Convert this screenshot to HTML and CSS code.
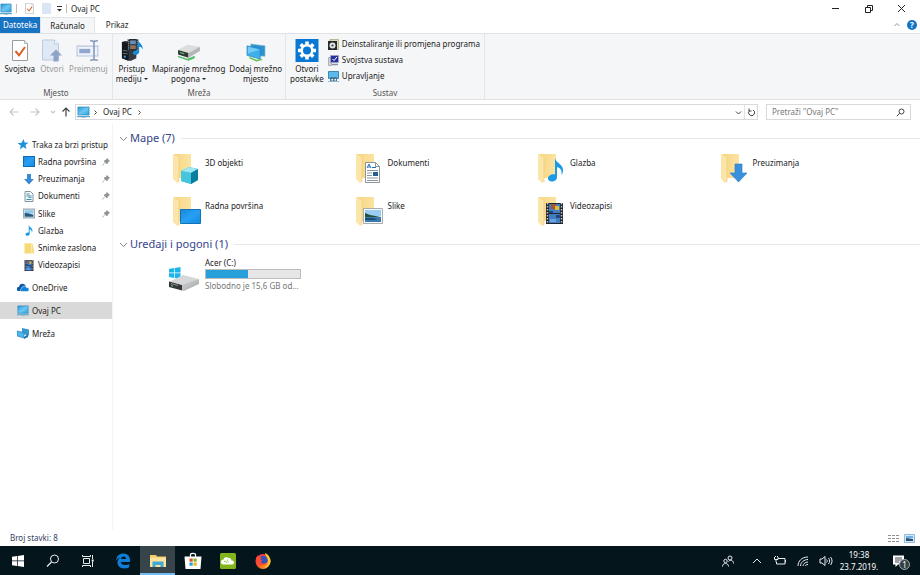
FILE: index.html
```html
<!DOCTYPE html>
<html lang="hr">
<head>
<meta charset="utf-8">
<meta name="viewport" content="width=device-width, initial-scale=1">
<title>Ovaj PC</title>
<link rel="stylesheet" href="styles.css">
</head>
<body>
<svg class="defs" aria-hidden="true">
  <defs>
    <linearGradient id="g-screen" x1="0" y1="0" x2="1" y2="1"><stop offset="0" stop-color="#2a94d8"/><stop offset=".5" stop-color="#6cc8f3"/><stop offset="1" stop-color="#2d9fe0"/></linearGradient>
    <linearGradient id="g-folder" x1="0" y1="0" x2="1" y2="0"><stop offset="0" stop-color="#f7d685"/><stop offset="1" stop-color="#fbe3a0"/></linearGradient>
    <linearGradient id="g-desk" x1="0" y1="0" x2="1" y2="1"><stop offset="0" stop-color="#1a86dc"/><stop offset=".5" stop-color="#27a0f3"/><stop offset="1" stop-color="#1588e0"/></linearGradient>
    <linearGradient id="g-metal" x1="0" y1="0" x2="1" y2="1"><stop offset="0" stop-color="#d6d6d6"/><stop offset="1" stop-color="#a4a5a6"/></linearGradient>
    <linearGradient id="g-fire" x1="0" y1="0" x2="1" y2="1"><stop offset="0" stop-color="#e8236a"/><stop offset=".5" stop-color="#ff5a26"/><stop offset="1" stop-color="#ffc62b"/></linearGradient>
  </defs>
  <symbol id="pc" viewBox="0 0 14 12" preserveAspectRatio="none"><path d="M1 1h12v8H1z" fill="url(#g-screen)" stroke="#2c83b8" stroke-width=".7"/><path d="M0 10h14v1.2H0z" fill="#54a7d4"/><path d="M5 11.2h4v.6H5z" fill="#8aa"/></symbol>
  <symbol id="checkdoc" viewBox="0 0 16 21"><path d="M.5.5h12l3 3v17H.5z" fill="#fff" stroke="#9a9da0"/><path d="M12.500.5v3h3" fill="#eee" stroke="#9a9da0" stroke-width=".7"/><path d="M3.500 11l3.500 4.300 6-8.300" fill="none" stroke="#d9622b" stroke-width="2"/></symbol>
  <symbol id="openi" viewBox="0 0 21 23"><path d="M1 1h12l4 4v16H1z" fill="#dfe8f5" stroke="#bccbe2"/><path d="M13 1v4h4" fill="#f4f7fb" stroke="#bccbe2"/><path d="M14.500 10.500l6 6h-3.500v6h-5v-6H8.500z" fill="#8ea3c8"/></symbol>
  <symbol id="rename" viewBox="0 0 22 21"><path d="M1 6.500h19v9H1z" fill="#eef2f9" stroke="#b9c6de"/><path d="M3 9h10v4H3z" fill="#8fa6d0"/><path d="M13 1.500c2 0 3 .2 3.500 1 .5-.8 1.500-1 3.500-1M13 19.500c2 0 3-.2 3.500-1 .5.8 1.500 1 3.500 1M16.500 2.500v16" fill="none" stroke="#8598bd" stroke-width="1.400"/></symbol>
  <symbol id="media" viewBox="0 0 23 24"><path d="M1 3l3-1 12 1v17l-6 3-9-3z" fill="#343a40"/><path d="M1 3l7 1v19l-7-3z" fill="#15191d"/><path d="M2 12l5 .5M2 15l5 .5" stroke="#69737c"/><circle cx="4" cy="18.500" r="1.200" fill="#2c93dc"/><path d="M7 0h11v12H7z" fill="#252b34"/><path d="M9.500 1.500h6v4h-6z" fill="#6a8fb5"/><path d="M9.500 6.500h6v4h-6z" fill="#8b7259"/><path d="M8 0v12M17 0v12" stroke="#b8c0c8" stroke-dasharray="1 1"/><path d="M17.500 0c0 4 6 5 5 11-1-3-2.500-3-3.500-3v5c0 2.500-2 3.500-4 3.500s-3-1-2.500-2.500 2.500-2.500 5-2z" fill="#168ad9"/></symbol>
  <symbol id="netdrive" viewBox="0 0 23 17"><path d="M1 6l9-5 12 2-11 6z" fill="#dcdddd"/><path d="M1 6l10 3v4.500L1 10.500z" fill="#333738"/><path d="M11 9l11-6v4l-11 6.500z" fill="#b4b6b7"/><path d="M3 8.500l4 1.300" stroke="#59d868"/><path d="M1 11.500l9 3 7-3v2.500l-6 2.500-10-3.500z" fill="#54bf69"/></symbol>
  <symbol id="netplace" viewBox="0 0 21 20"><path d="M5 1l15 2v11l-15-1z" fill="#2d91ce" stroke="#86bedc" stroke-width=".7"/><path d="M1 3l14 3v11L1 13z" fill="#3db0ec" stroke="#287fb3" stroke-width=".7"/><path d="M2 4l12 3-12 4z" fill="#75cdf5"/><path d="M3 14.500l8 3 6-1v1.500L11 19.500l-7-3z" fill="#5fc453"/></symbol>
  <symbol id="gear" viewBox="0 0 23 23"><path d="M0 0h23v23H0z" fill="#0878d4"/><g stroke="#fff" stroke-width="3.600"><path d="M11.500 2.500v18M2.500 11.500h18M5.200 5.200l12.600 12.600M17.800 5.200L5.200 17.800"/></g><circle cx="11.500" cy="11.500" r="5.300" fill="#0878d4" stroke="#fff" stroke-width="2.600"/></symbol>
  <symbol id="uninstall" viewBox="0 0 11 11"><path d="M2 .5h8.500v10H2z" fill="#dfd8bd" stroke="#a99e72" stroke-width=".7"/><path d="M0 2h9v9H0z" fill="#25292b"/><circle cx="4.500" cy="6.500" r="3" fill="#dfe3e4"/><circle cx="4.500" cy="6.500" r="1.100" fill="#3b4144"/></symbol>
  <symbol id="sysprop" viewBox="0 0 11 11"><path d="M.5 2.500h3v8h-3z" fill="#cfd3d8" stroke="#8a9099" stroke-width=".6"/><path d="M2.500 .500h8v7h-8z" fill="#27329d" stroke="#a4a9c4" stroke-width=".7"/><path d="M4.500 4L6 5.500 9 2" fill="none" stroke="#fff"/><path d="M4 9.500h6" stroke="#8c92a0" stroke-width="1.500"/></symbol>
  <symbol id="manage" viewBox="0 0 11 11"><path d="M.5.500h10v7H.5z" fill="#5dbaed" stroke="#4387ae"/><path d="M2 6h7v4.500H2z" fill="#477b9d"/><path d="M3.500 8h1.500v1.500H3.500zM6.500 8H8v1.500H6.500z" fill="#fff"/><path d="M0 10.500h11" stroke="#96b4c4"/></symbol>
  <symbol id="star" viewBox="0 0 10 10"><path d="M5.500 0l1 3.200 3.500.3-2.800 2 1 3.700-3-2-3 2.300.8-3.500L0 3.800l3.800-.5z" fill="#1d91dc"/></symbol>
  <symbol id="desk" viewBox="0 0 12 10" preserveAspectRatio="none"><path d="M.5.500h11v9H.5z" fill="url(#g-desk)" stroke="#0d6cb8"/></symbol>
  <symbol id="down" viewBox="0 0 10 11"><path d="M3 0h4v5h3l-5 5.500L0 5h3z" fill="#3a8ad8"/></symbol>
  <symbol id="doc" viewBox="0 0 9 11"><path d="M.5.500H6L8.500 3v7.500h-8z" fill="#f3f8fb" stroke="#82959f"/><path d="M2 3h3M2 5h5M2 8.500h5" stroke="#3c8cab"/><path d="M4 6.500h3" stroke="#5ca1bd"/></symbol>
  <symbol id="pic" viewBox="0 0 11 9"><path d="M.5.500h10v8H.5z" fill="#e8f3fa" stroke="#9cabb5"/><path d="M1.500 1.500h8v3h-8z" fill="#8ec7ed"/><path d="M1.500 4l3 .2 5 1.500v1.800h-8z" fill="#26587b"/></symbol>
  <symbol id="note" viewBox="0 0 15 24"><path d="M7 0c1 5 8 6 8 12 0 2-.5 4-1.500 5 .5-5-1-7-4.500-8v10c0 3-2.500 4.500-5.200 4.500C1.300 23.500 0 22 0 20.200c0-2.700 4-4.700 7-3.700z" fill="#1a9ae6"/></symbol>
  <symbol id="yellow" viewBox="0 0 10 11"><path d="M.5.500h8l1.500 8v2H.5z" fill="#f8d978"/><path d="M.5.500h7v9h2" fill="none" stroke="#fbe8ab"/></symbol>
  <symbol id="film" viewBox="0 0 17 21"><path d="M0 0h17v21H0z" fill="#20262e"/><path d="M1.500 0v21M15.500 0v21" stroke="#c0c5cb" stroke-width="1.500" stroke-dasharray="1.500 1.500"/><path d="M3 1h11v9H3zM3 11h11v9H3z" fill="#427dc0"/><path d="M5 1h5v5H5z" fill="#a45733"/><path d="M9 3h4v4H9z" fill="#e2b930"/><path d="M3 8h4v2H3zM10 12h4v3h-4z" fill="#23457d"/><path d="M4 16h6v3H4z" fill="#68a4e3"/></symbol>
  <symbol id="cloud" viewBox="0 0 12 9"><path d="M1.500 8A2 2 0 0 1 2 4 3.500 3.500 0 0 1 8.500 2.500L9.500 8z" fill="#0b57a8"/><path d="M4.500 8.500a2 2 0 0 1 .3-3.500A2.500 2.500 0 0 1 9.500 4.500a2 2 0 0 1 1 4z" fill="#1583da" stroke="#fff" stroke-width=".5"/></symbol>
  <symbol id="network" viewBox="0 0 12 11"><path d="M5 0l7 1.500v6L5 6z" fill="#3899d2"/><path d="M0 3l7 1.500V10L0 8z" fill="#48b8ed" stroke="#2475a7" stroke-width=".6"/><path d="M7 9l4-3v3L7 11z" fill="#2872a5"/></symbol>
  <symbol id="pin" viewBox="0 0 8 8"><path d="M5 .500L7.500 3 6 3.800 5 6 2 3l2.300-1zM3 4.500L.5 7.500" fill="#8d9194" stroke="#8d9194" stroke-width=".7"/></symbol>
  <symbol id="folder" viewBox="0 0 30 32"><path d="M3 1h17v24H6z" fill="url(#g-folder)"/><path d="M2 1l6 4v24l-2 1-4-4z" fill="#fbe5a8"/><path d="M8 5v24" stroke="#edc970" stroke-width=".6"/></symbol>
  <symbol id="f-3d" viewBox="0 0 30 32"><use href="#folder"/><path d="M10 18l8-4 9 2v11l-7 4-10-3z" fill="#28abc9"/><path d="M10 18l8-4 9 2-7 4z" fill="#9fe8f1"/><path d="M20 20l7-4v11l-7 4z" fill="#087f9f"/><path d="M10 18l10 2v11l-10-3z" fill="#46c6dd"/></symbol>
  <symbol id="f-doc" viewBox="0 0 30 32"><use href="#folder"/><path d="M11.500 9.500h10l4 4v16h-14z" fill="#fff" stroke="#8b9298"/><path d="M21.500 9.500v4h4" fill="none" stroke="#8b9298"/><path d="M13 15l2-4 2 4M14 14h2M18 14.500h4" fill="none" stroke="#2272b9"/><path d="M13 17.500h11M13 20h5M13 22.500h5M13 25h11M13 27.500h11" stroke="#8a959d"/><path d="M19 19h5v4h-5z" fill="#255e91"/></symbol>
  <symbol id="f-music" viewBox="0 0 30 32"><use href="#folder"/><use href="#note" x="12" y="5" width="15" height="24"/></symbol>
  <symbol id="f-down" viewBox="0 0 30 32"><use href="#folder"/><path d="M16 11h7v9h5l-8.500 9-8.500-9h5z" fill="#3990dd" stroke="#277bc5" stroke-width=".6"/></symbol>
  <symbol id="f-desk" viewBox="0 0 30 32"><use href="#folder"/><path d="M9.500 13.500h20v14h-20z" fill="url(#g-desk)" stroke="#1373b8"/></symbol>
  <symbol id="f-pic" viewBox="0 0 30 32"><use href="#folder"/><path d="M9.500 12.500h19v15h-19z" fill="#f6f8f9" stroke="#a7acb0"/><path d="M11 14h16v6H11z" fill="#9bcdf0"/><path d="M11 17l5 2 11 2v2H11z" fill="#23513d"/><path d="M11 21h16v5H11z" fill="#3b7bab"/><path d="M11 22h9l3 2H11z" fill="#1d4c74"/></symbol>
  <symbol id="f-video" viewBox="0 0 30 32"><use href="#folder"/><use href="#film" x="10" y="7" width="17" height="21"/></symbol>
  <symbol id="disk" viewBox="0 0 32 26"><path d="M1 3l5-1v4.500H1zM6.700 1.900L12.500 1v5.500H6.700zM1 7.300h5v4.600l-5-.8zM6.700 7.300h5.800V13l-5.800-1z" fill="#1cb4ea"/><path d="M1 16l14-7 16 4-15 6z" fill="#d6d7d8"/><path d="M13 19l18-6v5l-15 7-3-1z" fill="url(#g-metal)"/><path d="M1 15.500l13 3.500v5.500L1 21z" fill="#35383a"/><path d="M3 17.500l7 2" stroke="#8b9193"/><path d="M3 19.500l2 .6" stroke="#54d278"/></symbol>
</svg>

<div class="window">
  <header class="titlebar">
    <svg class="t-pc"><use href="#pc"/></svg><i class="bar"></i>
    <button class="quick" aria-label="Svojstva"><svg class="t-doc"><use href="#checkdoc"/></svg></button>
    <button class="quick" aria-label="Nova mapa"><svg class="t-doc" viewBox="0 0 9 11"><path d="M0 0h9v11H0z" fill="#dbe6f5"/></svg></button>
    <button aria-label="Prilagodi"><svg class="t-more" viewBox="0 0 5 6"><path d="M0 .5h5" stroke="#333"/><path d="M0 3h5L2.500 5.500z" fill="#333"/></svg></button>
    <i class="bar"></i>
    <h1>Ovaj PC</h1>
    <div class="win-controls">
      <button aria-label="Smanji"><svg viewBox="0 0 9 9"><path d="M1 4.500h7"/></svg></button>
      <button aria-label="Vrati"><svg viewBox="0 0 9 9"><path d="M1.500 3.500h5v5h-5zM3.500 3V1.500h5v5H7"/></svg></button>
      <button aria-label="Zatvori"><svg viewBox="0 0 9 9"><path d="M1 1l7 7M8 1L1 8"/></svg></button>
    </div>
  </header>

  <nav class="tabs" aria-label="Vrpca">
    <button class="tab file">Datoteka</button><button class="tab current">Računalo</button><button class="tab">Prikaz</button>
    <button class="collapse" aria-label="Sažmi vrpcu"><svg viewBox="0 0 8 8"><path d="M1.500 5L4 2.500 6.500 5" fill="none" stroke="#999"/></svg></button>
    <button class="help" aria-label="Pomoć">?</button>
  </nav>

  <section class="ribbon" aria-label="Računalo">
    <div class="group place">
      <div class="tools">
        <button class="tool"><svg class="i-check"><use href="#checkdoc"/></svg><span>Svojstva</span></button>
        <button class="tool" disabled><svg class="i-big"><use href="#openi"/></svg><span>Otvori</span></button>
        <button class="tool" disabled><svg class="i-big"><use href="#rename"/></svg><span>Preimenuj</span></button>
      </div>
      <h2>Mjesto</h2>
    </div>
    <div class="group net">
      <div class="tools">
        <button class="tool"><svg class="i-big"><use href="#media"/></svg><span>Pristup<br>mediju <b class="caret"></b></span></button>
        <button class="tool"><svg class="i-big low"><use href="#netdrive"/></svg><span>Mapiranje mrežnog<br>pogona <b class="caret"></b></span></button>
        <button class="tool"><svg class="i-big low"><use href="#netplace"/></svg><span>Dodaj mrežno<br>mjesto</span></button>
      </div>
      <h2>Mreža</h2>
    </div>
    <div class="group system">
      <div class="tools">
        <button class="tool"><svg class="i-big"><use href="#gear"/></svg><span>Otvori<br>postavke</span></button>
        <div class="stack">
          <button><svg><use href="#uninstall"/></svg>Deinstaliranje ili promjena programa</button>
          <button><svg><use href="#sysprop"/></svg>Svojstva sustava</button>
          <button><svg><use href="#manage"/></svg>Upravljanje</button>
        </div>
      </div>
      <h2>Sustav</h2>
    </div>
  </section>

  <div class="location">
    <button class="nav off" aria-label="Natrag"><svg viewBox="0 0 10 10"><path d="M9.500 5H1M4.500 1.500L1 5l3.500 3.500"/></svg></button>
    <button class="nav off" aria-label="Naprijed"><svg viewBox="0 0 10 10"><path d="M.5 5H9M5.500 1.500L9 5 5.500 8.500"/></svg></button>
    <button class="nav tiny off" aria-label="Nedavna mjesta"><svg viewBox="0 0 10 10"><path d="M3 4l2 2 2-2"/></svg></button>
    <button class="nav up" aria-label="Gore"><svg viewBox="0 0 10 10"><path d="M5 9.500V1M1.500 4.500L5 1l3.500 3.500"/></svg></button>
    <div class="address">
      <svg class="a-pc"><use href="#pc"/></svg>
      <svg class="sep" viewBox="0 0 5 7"><path d="M1.500 1.500l2 2-2 2"/></svg>
      <a href="#">Ovaj PC</a>
      <svg class="sep" viewBox="0 0 5 7"><path d="M1.500 1.500l2 2-2 2"/></svg>
      <button class="drop" aria-label="Prethodna mjesta"><svg viewBox="0 0 9 9"><path d="M2 3.500L4.500 6 7 3.500"/></svg></button>
      <button class="refresh" aria-label="Osvježi"><svg viewBox="0 0 9 9"><path d="M6 2a3 3 0 1 1-3.500.5M2 .5v2.500h2.500"/></svg></button>
    </div>
    <form class="search">
      <input type="search" aria-label="Pretraži" placeholder='Pretraži "Ovaj PC"'>
      <button type="button" aria-label="Traži"><svg viewBox="0 0 9 9"><circle cx="5.500" cy="3.500" r="2.500"/><path d="M3.700 5.300L.8 8.200"/></svg></button>
    </form>
  </div>

  <div class="body">
    <nav class="sidebar" aria-label="Mape">
      <ul class="quick-list">
        <li><a class="root" href="#"><svg><use href="#star"/></svg>Traka za brzi pristup</a></li>
        <li><a href="#"><svg><use href="#desk"/></svg><span>Radna površina</span><svg class="pin"><use href="#pin"/></svg></a></li>
        <li><a href="#"><svg><use href="#down"/></svg><span>Preuzimanja</span><svg class="pin"><use href="#pin"/></svg></a></li>
        <li><a href="#"><svg><use href="#doc"/></svg><span>Dokumenti</span><svg class="pin"><use href="#pin"/></svg></a></li>
        <li><a href="#"><svg><use href="#pic"/></svg><span>Slike</span><svg class="pin"><use href="#pin"/></svg></a></li>
        <li><a href="#"><svg><use href="#note"/></svg><span>Glazba</span></a></li>
        <li><a href="#"><svg><use href="#yellow"/></svg><span>Snimke zaslona</span></a></li>
        <li><a href="#"><svg><use href="#film"/></svg><span>Videozapisi</span></a></li>
      </ul>
      <ul class="places">
        <li><a class="root" href="#"><svg><use href="#cloud"/></svg>OneDrive</a></li>
        <li><a class="root selected" href="#"><svg><use href="#pc"/></svg>Ovaj PC</a></li>
        <li><a class="root" href="#"><svg><use href="#network"/></svg>Mreža</a></li>
      </ul>
    </nav>

    <main>
      <section>
        <h2><button><svg viewBox="0 0 9 9"><path d="M1 3l3.500 3.500L8 3"/></svg>Mape (7)</button></h2>
        <div class="items">
          <a href="#"><svg><use href="#f-3d"/></svg>3D objekti</a>
          <a href="#"><svg><use href="#f-doc"/></svg>Dokumenti</a>
          <a href="#"><svg><use href="#f-music"/></svg>Glazba</a>
          <a href="#"><svg><use href="#f-down"/></svg>Preuzimanja</a>
          <a href="#"><svg><use href="#f-desk"/></svg>Radna površina</a>
          <a href="#"><svg><use href="#f-pic"/></svg>Slike</a>
          <a href="#"><svg><use href="#f-video"/></svg>Videozapisi</a>
        </div>
      </section>
      <section>
        <h2><button><svg viewBox="0 0 9 9"><path d="M1 3l3.500 3.500L8 3"/></svg>Uređaji i pogoni (1)</button></h2>
        <div class="items">
          <a class="drive" href="#"><svg><use href="#disk"/></svg>
            <span class="info"><span>Acer (C:)</span><span class="usage" role="meter" aria-valuenow="45" aria-valuemin="0" aria-valuemax="100" aria-label="Iskorišteno"><i style="width:45%"></i></span><span class="free">Slobodno je 15,6 GB od...</span></span></a>
        </div>
      </section>
    </main>
  </div>

  <footer class="status">
    <span>Broj stavki: 8</span>
    <div>
      <button aria-label="Detalji"><svg viewBox="0 0 12 9"><path d="M0 1.500h3M0 4.500h3M0 7.500h3M4 1.500h3M8 1.500h3M4 4.500h3M8 4.500h3M4 7.500h3M8 7.500h3" stroke="#8a9096"/></svg></button>
      <button aria-label="Velike ikone"><svg viewBox="0 0 12 9"><path d="M.5.500h10v8H.5z" fill="#d4eafa" stroke="#8abce0"/><path d="M2 2h7v2H2z" fill="#6eb0e2"/><path d="M2 4l7 1v2H2z" fill="#2a506c"/></svg></button>
    </div>
  </footer>
</div>

<div class="taskbar">
  <div class="apps">
    <button aria-label="Start"><svg viewBox="0 0 18 18"><path d="M3 4.800l5-.7v4.500H3zM8.700 4L15 3v5.600H8.700zM3 9.300h5v4.600l-5-.7zM8.700 9.300H15V15l-6.300-1z" fill="#fff"/></svg></button>
    <button aria-label="Traži"><svg viewBox="0 0 18 18"><circle cx="10.500" cy="7" r="4" fill="none" stroke="#e8eced"/><path d="M7.500 10L3 14.500" stroke="#e8eced" stroke-width="1.200"/></svg></button>
    <button aria-label="Prikaz zadataka"><svg viewBox="0 0 18 18"><path d="M4.500 6.500h6v5h-6zM3.500 3v1.500h8V3M3.500 15v-1.500h8V15M13.500 3v4M13.500 9.500V15" fill="none" stroke="#e8eced"/><path d="M12.700 7.500h2v2h-2z" fill="#fff"/></svg></button>
    <button aria-label="Edge"><svg viewBox="0 0 18 18"><path d="M2 8.500C2.500 4 5.500 1.500 9.300 1.500c4.500 0 6.700 3 6.700 6.500v2H6.800c.1 2 2 3 4.200 3 1.800 0 3.200-.5 4.200-1.100v3.300c-1.200.8-3 1.200-5 1.200-4 0-6.700-2.400-6.700-5.900 0-2.200 1-4 3-5C4.500 6 3 7 2 8.500zM7 7h5c0-1.500-.9-2.400-2.400-2.400S7.200 5.600 7 7z" fill="#0f7ed8"/></svg></button>
    <button class="active" aria-label="Eksplorer za datoteke"><svg viewBox="0 0 18 18"><path d="M1 3h6l1 1.500h9V15H1z" fill="#f3cb65"/><path d="M1 5.500h16V15H1z" fill="#fbe399"/><path d="M3.500 9.500h11V15h-3v-2h-5v2h-3z" fill="#40a9da"/></svg></button>
    <button aria-label="Store"><svg viewBox="0 0 18 18"><path d="M6.500 5V2.500c0-1.500 5-1.500 5 0V5" fill="none" stroke="#fff" stroke-width="1.200"/><path d="M.5 4.500h17L16.500 17h-15z" fill="#fff"/><path d="M5.500 6.500h3.200v3.200H5.500z" fill="#e45128"/><path d="M9.500 6.500h3.200v3.200H9.500z" fill="#80b81c"/><path d="M5.500 10.500h3.200v3.200H5.500z" fill="#249fd7"/><path d="M9.500 10.500h3.200v3.200H9.500z" fill="#f1b51c"/></svg></button>
    <button aria-label="Oblak"><svg viewBox="0 0 18 18"><rect x="1" y="1" width="16" height="16" rx="1.500" fill="#82b51d"/><path d="M4.500 12.500a2.500 2.500 0 0 1 0-5 3 3 0 0 1 5-1.500 2.500 2.500 0 0 1 3 2.500 2 2 0 0 1 1 4z" fill="#fff"/><path d="M5 9.500c1.500-.5 2.500 0 3 1.500M9 7.500c-1 1-.5 2 .5 2.500" fill="none" stroke="#82b51d" stroke-width=".8"/></svg></button>
    <button aria-label="Firefox"><svg viewBox="0 0 18 18"><circle cx="9" cy="9.500" r="7.500" fill="url(#g-fire)"/><circle cx="9.500" cy="8" r="4.300" fill="#3850bd"/><path d="M2 6l2-3 .5 2 3 .5-1 2 2 1.500-2 .8c1 2 4 2.500 6 .5-.5 3-7 4.500-9.500.7z" fill="#ff4b31"/><path d="M11 1c3 1 5.500 4.500 5.500 8s-3 6-6 7c3-2.500 4-5 3.500-8S11 3.500 11 1z" fill="#ffc82c"/></svg></button>
  </div>
  <div class="tray">
    <button class="people" aria-label="Osobe"><svg viewBox="0 0 14 14"><circle cx="9" cy="4" r="2"/><circle cx="4.500" cy="7" r="1.700"/><path d="M1.500 12.500c0-4 6-4 6 0M7.500 7.500c2-2.500 5-1 5 2"/></svg></button>
    <button aria-label="Skrivene ikone"><svg viewBox="0 0 14 14"><path d="M3 9l4-4 4 4"/></svg></button>
    <button aria-label="Baterija"><svg viewBox="0 0 14 14"><path d="M5 4.500h7v5.500H3.500V8M12.500 6v2.500M1.500 3v2.500h3.500V3M3 5.500V8M2.500 2v1M4.500 2v1"/></svg></button>
    <button aria-label="Wi-Fi"><svg viewBox="0 0 14 14"><path d="M2 12C2 7 6 3 12 3M4.500 12C4.500 8.500 8 5.500 12 5.500M7 12c0-2 2.500-4 5-4M9.500 12c0-1 1-1.500 2.500-1.500"/></svg></button>
    <button aria-label="Glasnoća"><svg viewBox="0 0 14 14"><path d="M1 5h2l3-2.500v9L3 9H1zM7.500 5.500c1 1 1 2 0 3M9.500 4c1.500 2 1.500 4 0 6M11.500 3c2 2.500 2 5.500 0 8"/></svg></button>
    <button class="clock"><time datetime="2019-07-23T19:38">19:38<br>23.7.2019.</time></button>
    <button class="notify" aria-label="Obavijesti"><svg viewBox="0 0 14 14"><path d="M1 1.500h11v9H6L3.500 13v-2.500H1z" fill="#fff" stroke="none"/><path d="M3 4h7M3 6h7M3 8h4" stroke="#07151c" stroke-width=".8"/></svg><span class="badge">1</span></button>
  </div>
</div>
</body>
</html>
```
FILE: styles.css
```css
* { box-sizing: border-box; }
body {
  margin: 0;
  min-height: 100vh;
  display: flex;
  flex-direction: column;
  background: #fff;
  color: #222;
  font: 8px/10px "Noto Sans", "Open Sans", sans-serif;
}
button, input { font: inherit; color: inherit; }
button { border: 0; padding: 0; background: none; }
a { color: inherit; text-decoration: none; }
h1, h2 { margin: 0; font: inherit; }
ul { list-style: none; margin: 0; padding: 0; }
svg { display: block; flex: none; }
.defs { position: absolute; width: 0; height: 0; }
.window { flex: 1; display: flex; flex-direction: column; }

/* Title bar */
.titlebar { display: flex; align-items: center; height: 17px; }
.t-pc { width: 12px; height: 12px; }
.bar { width: 1px; height: 9px; margin: 0 4px; background: #bbb; }
.quick { margin: 0 4px; }
.t-doc { width: 9px; height: 11px; }
.t-more { width: 5px; height: 6px; margin-left: 2px; }
.win-controls { margin-left: auto; margin-right: 2px; display: flex; }
.win-controls button { width: 33px; height: 15px; display: grid; place-items: center; }
.win-controls svg { width: 9px; height: 9px; fill: none; stroke: #222; }

/* Ribbon */
.tabs { display: flex; height: 16px; align-items: stretch; }
.tab { padding: 0 11px; }
.tab.file { padding: 0 3px; background: #1873c2; color: #fff; }
.tab.current { background: #f5f6f7; border: 1px solid #e2e4e6; border-bottom: 0; padding: 0 9px; }
.collapse { margin-left: auto; margin-right: 6px; }
.collapse svg { width: 8px; height: 8px; }
.help { align-self: center; width: 10px; height: 10px; margin-right: 3px; border-radius: 50%; background: #1274c4; color: #fff; font-weight: 700; }
.ribbon { display: flex; height: 67px; background: #f5f6f7; border: solid #e0e2e4; border-width: 1px 0; }
.group { display: flex; flex-direction: column; justify-content: space-between; padding: 5px 0 1px; border-right: 1px solid #e3e5e7; }
.group h2 { text-align: center; color: #555; }
.place { width: 113px; }
.net { width: 173px; }
.system { width: 199px; }
.tools { display: flex; justify-content: center; }
.tool { display: flex; flex-direction: column; align-items: center; gap: 2px; white-space: nowrap; }
.tool:disabled { color: #999; }
.place .tools { gap: 5px; }
.net .tools { gap: 4px; }
.system .tools { justify-content: flex-start; gap: 4px; padding-left: 4px; }
.i-big, .i-check { width: 24px; height: 23px; }
.i-check { padding: 1px 0; }
.low { padding-top: 4px; }
.caret { display: inline-block; border: 2px solid transparent; border-top-color: #222; border-bottom: 0; vertical-align: 2px; }
.stack { display: flex; flex-direction: column; margin-top: -3px; }
.stack button { display: flex; align-items: center; gap: 3px; height: 16px; white-space: nowrap; }
.stack svg { width: 11px; height: 11px; }

/* Address row */
.location { display: flex; align-items: center; height: 24px; padding: 0 9px 0 8px; }
.nav { width: 12px; margin-right: 9px; }
.nav.tiny { width: 8px; margin: 0 4px 0 -2px; }
.nav.up { margin-right: 3px; }
.nav svg { width: 10px; height: 10px; fill: none; stroke: #444; stroke-width: 1.2; margin: auto; }
.nav.off svg { stroke: #c8c8c8; }
.address { flex: 1; display: flex; align-items: center; height: 16px; padding-left: 1px; border: 1px solid #d9d9d9; }
.a-pc { width: 13px; height: 12px; }
.sep { width: 5px; height: 7px; margin: 0 5px 0 3px; fill: none; stroke: #444; }
.address a + .sep { margin-left: 5px; }
.drop { margin-left: auto; margin-right: 1px; }
.drop svg, .refresh svg, .search svg { width: 9px; height: 9px; fill: none; stroke: #444; }
.refresh { align-self: stretch; width: 13px; border-left: 1px solid #e2e2e2; }
.refresh svg { margin: auto; }
.search { display: flex; align-items: center; width: 145px; height: 16px; margin-left: 8px; padding: 0 5px; border: 1px solid #d9d9d9; }
.search input { flex: 1; min-width: 0; border: 0; padding: 0; background: none; outline: 0; }
.search input::placeholder { color: #777; opacity: 1; }

/* Folder tree */
.body { flex: 1; display: flex; }
.sidebar { width: 113px; padding-top: 12px; border-right: 1px solid #f3f3f3; }
.quick-list { display: grid; grid-auto-rows: 1fr; height: 138px; }
.sidebar a { display: flex; align-items: center; gap: 3px; height: 17px; padding: 0 2px 0 23px; white-space: nowrap; }
.sidebar a.root { padding-left: 17px; }
.sidebar svg { width: 12px; height: 11px; }
.sidebar svg.pin { width: 8px; height: 8px; margin-left: auto; }
.places { display: grid; gap: 6px; padding-top: 5px; }
.sidebar a.selected { background: #d9d9d9; }

/* Contents */
main { flex: 1; padding: 5px 0 0 6px; }
main h2 { display: flex; align-items: center; gap: 6px; height: 18px; color: #34438a; font-size: 11px; line-height: 16px; }
main h2::after { content: ""; flex: 1; height: 1px; background: #e5e8ee; }
main h2 button { display: flex; align-items: center; gap: 2px; }
main h2 svg { width: 9px; height: 9px; fill: none; stroke: #888; }
.items { display: grid; grid-template-columns: repeat(4, 1fr); grid-auto-rows: 39px; row-gap: 4px; margin: 6px 22px 0 49px; }
.items a { display: flex; gap: 4px; padding-left: 3px; line-height: 20px; }
.items svg { width: 30px; height: 32px; }
section + section .items { margin-top: 4px; }
.items a.drive { padding-left: 0; gap: 5px; line-height: 11px; }
.items .drive svg { width: 32px; height: 26px; margin-top: 9px; }
.info { display: flex; flex-direction: column; white-space: nowrap; }
.usage { display: block; width: 96px; height: 10px; margin: 1px 0; border: 1px solid #bcbcbc; background: #e6e6e6; }
.usage i { display: block; height: 100%; background: #26a0da; }
.free { color: #777; }

/* Status bar */
.status { display: flex; justify-content: space-between; align-items: center; height: 16px; padding: 0 4px 0 10px; color: #34415f; }
.status div { display: flex; gap: 4px; }
.status svg { width: 12px; height: 9px; }

/* Taskbar */
.taskbar { display: flex; justify-content: space-between; height: 29px; background: #04151c; color: #fff; }
.apps, .tray { display: flex; }
.apps button { width: 35px; display: grid; place-items: center; }
.apps svg { width: 18px; height: 18px; }
.apps .active { background: #37444a; box-shadow: inset 0 -2px #76b9ed; }
.tray { align-items: center; padding-right: 3px; }
.tray svg { width: 14px; height: 14px; fill: none; stroke: #e8eced; }
.tray button { width: 23px; display: grid; place-items: center; }
.tray .people { margin-right: 6px; }
.tray .clock { width: 44px; line-height: 12px; }
.tray .notify { width: 36px; position: relative; }
.badge { position: absolute; left: 18px; top: 5px; width: 11px; height: 11px; border: 1px solid #a5abad; border-radius: 50%; background: #343e43; line-height: 9px; }
```
